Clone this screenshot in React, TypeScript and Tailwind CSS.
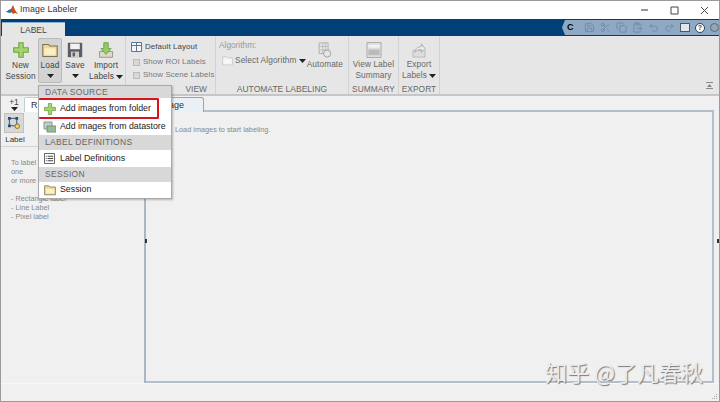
import { Save, Scissors, Copy, ClipboardPaste, Undo2, Redo2 } from 'lucide-react';

const Caret = ({ className = '' }: { className?: string }) => (
  <svg width="7" height="4" viewBox="0 0 7 4" className={className}>
    <path d="M0 0h7L3.500 4z" fill="#222" />
  </svg>
);

const PlusIcon = ({ size = 16 }: { size?: number }) => (
  <svg width={size} height={size} viewBox="0 0 22 22">
    <path d="M8 1h6v7h7v6h-7v7H8v-7H1V8h7z" fill="#a5d36e" stroke="#6ea544" strokeWidth="1.500" />
  </svg>
);

const FolderIcon = ({ size = 16, faded = false }: { size?: number; faded?: boolean }) => (
  <svg width={size} height={size} viewBox="0 0 20 20">
    <path d="M1 3h7l2 2h9v13H1z" fill={faded ? '#f0f0f0' : '#f1d98f'} stroke={faded ? '#c4c4c4' : '#77715c'} strokeWidth="1.300" />
    <path d="M3 8h14v8H3z" fill={faded ? '#f7f7f7' : '#fbefc4'} />
  </svg>
);

const SaveIcon = () => (
  <svg width="16" height="16" viewBox="0 0 20 20">
    <path d="M1 1h18v18H1z" fill="#5b5f64" />
    <path d="M4 2h12v7H4z" fill="#f2f2f2" />
    <path d="M5 12h10v7H5z" fill="#cfcfcf" />
    <path d="M7 13h3v5H7z" fill="#5b5f64" />
  </svg>
);

const ImportIcon = () => (
  <svg width="16" height="16" viewBox="0 0 22 22">
    <path d="M2 13h18v8H2z" fill="#ddd8ca" stroke="#99958a" strokeWidth="1.300" />
    <path d="M8 1h6v8h4l-7 8-7-8h4z" fill="#96cb64" stroke="#6ea544" strokeWidth="1.300" />
  </svg>
);

const RibbonButton = ({ icon, lines, caret, active, width }: { icon: React.ReactNode; lines: string[]; caret?: 'below' | 'inline'; active?: boolean; width: string }) => (
  <div className={`${width} flex flex-col items-center h-[45px] pt-[3px] rounded-[2px] border ${active ? 'bg-[#d3d3d3] border-[#b9b9b9]' : 'border-transparent'}`}>
    <div className="h-[16px] mb-[2px] flex items-center justify-center">{icon}</div>
    {lines.map((line, i) => (
      <div key={line} className="text-[8.300px] tracking-[0.1px] leading-[11px] whitespace-nowrap flex items-center gap-[2px] text-[#444]">
        {line}
        {caret === 'inline' && i === lines.length - 1 && <Caret />}
      </div>
    ))}
    {caret === 'below' && <Caret className="mt-[3px]" />}
  </div>
);

const SectionHead = ({ label, h }: { label: string; h: string }) => (
  <div className={`${h} flex items-center bg-[#d8d8d8] text-[#666] text-[8.500px] pl-[6px] tracking-[0.3px]`}>{label}</div>
);

const MenuRow = ({ icon, label, h }: { icon: React.ReactNode; label: string; h: string }) => (
  <div className={`flex items-center ${h} bg-white text-[8.800px] text-[#222]`}>
    <div className="w-[21px] flex justify-center shrink-0">{icon}</div>
    <span className="whitespace-nowrap">{label}</span>
  </div>
);

const LoadMenu = () => (
  <div className="absolute left-[37px] top-[84px] w-[134px] bg-white border border-[#a9a9a9] shadow-[1px_1px_2px_rgba(0,0,0,0.25)] z-10">
    <SectionHead label="DATA SOURCE" h="h-[12px]" />
    <div className="w-[120px] border-2 border-[#d7141e] rounded-[1px]">
      <div className="-ml-[2px]">
        <MenuRow icon={<PlusIcon size={12} />} label="Add images from folder" h="h-[17px]" />
      </div>
    </div>
    <MenuRow
      h="h-[16px]"
      icon={
        <svg width="13" height="12" viewBox="0 0 13 12">
          <path d="M1 1h8v7H1z" fill="#c5ceca" stroke="#8a9691" />
          <path d="M4 5h9v6H4z" fill="#93bd96" stroke="#72927a" />
        </svg>
      }
      label="Add images from datastore"
    />
    <SectionHead label="LABEL DEFINITIONS" h="h-[15px]" />
    <MenuRow
      h="h-[17px]"
      icon={
        <svg width="11" height="11" viewBox="0 0 12 12">
          <path d="M.5.5h11v11H.5z" fill="#fff" stroke="#555" />
          <path d="M2 3h1v1H2zM4 3h6v1H4zM2 5.500h1v1H2zM4 5.500h6v1H4zM2 8h1v1H2zM4 8h6v1H4z" fill="#444" />
        </svg>
      }
      label="Label Definitions"
    />
    <SectionHead label="SESSION" h="h-[15px]" />
    <MenuRow h="h-[16px]" icon={<FolderIcon size={12} />} label="Session" />
  </div>
);

const quickIcons = [Save, Scissors, Copy, ClipboardPaste, Undo2, Redo2];

export default function App() {
  return (
    <div className="relative w-[720px] h-[402px] overflow-hidden flex flex-col bg-[#f0f0f0] border border-[#9a9a9a] text-[#333]" style={{ fontFamily: '"Liberation Sans", Arial, sans-serif' }}>
      {/* title bar */}
      <div className="h-[18px] bg-white flex items-center pl-[5px] shrink-0">
        <svg width="12" height="12" viewBox="0 0 12 12">
          <path d="M0 8l3-2 2-1 2-4 2 5 3 4-3-1-2 1-2-3-2 1z" fill="#c8501e" />
          <path d="M0 8l3-2 2-1 1 3-2 1z" fill="#2a6fa8" />
        </svg>
        <span className="ml-[2px] text-[8.800px] tracking-[0.1px] text-[#333]">Image Labeler</span>
        <div className="ml-auto flex items-center">
          <svg width="8" height="8" viewBox="0 0 8 8" className="mr-[21px]"><path d="M0 4h7" stroke="#777" strokeWidth="1.500" /></svg>
          <svg width="9" height="9" viewBox="0 0 9 9" className="mr-[21px]"><path d="M1 1h7v7H1z" fill="none" stroke="#444" /></svg>
          <svg width="9" height="9" viewBox="0 0 9 9" className="mr-[10px]"><path d="M1 1l7 7M8 1L1 8" stroke="#444" /></svg>
        </div>
      </div>

      {/* tab strip */}
      <div className="h-[17px] bg-[#003f78] flex items-end pl-[1px] shrink-0 relative">
        <div className="w-[63px] h-[14px] bg-[#e6e6e6] text-center text-[8.500px] leading-[14px] text-[#444] border-t border-[#8fb0cc]">LABEL</div>
        <div className="absolute right-0 top-[1px] h-[15px] w-[157px] bg-[#8fa9c4] flex items-center pl-[5px] gap-[5px] [clip-path:polygon(3px_0,100%_0,100%_100%,3px_100%,0_50%)]">
          <span className="w-[16px] text-[9px] font-bold text-black">C</span>
          {quickIcons.map((Icon, i) => (
            <Icon key={i} size={11} strokeWidth={2} className="text-[#6f8ba8] shrink-0" />
          ))}
          <div className="w-[10px] h-[9px] shrink-0 bg-[#dfe6ee] border border-[#555]" />
          <div className="w-[10px] h-[10px] shrink-0 rounded-full bg-white border border-[#24425f] text-[7px] leading-[8px] text-center font-bold text-[#24425f]">?</div>
          <div className="w-[9px] h-[9px] shrink-0 rounded-full bg-[#9aa5b0] border border-[#5b6b7a]" />
        </div>
      </div>

      {/* ribbon */}
      <div className="h-[60px] bg-[#e6e6e6] border-b-2 border-[#c6c6c6] flex shrink-0 relative">
        <div className="flex pl-[2px] pt-[2px] w-[125px] border-r border-[#d2d2d2]">
          <RibbonButton width="w-[35px]" icon={<PlusIcon />} lines={['New', 'Session']} />
          <RibbonButton width="w-[24px]" active icon={<FolderIcon />} lines={['Load']} caret="below" />
          <RibbonButton width="w-[26px]" icon={<SaveIcon />} lines={['Save']} caret="below" />
          <RibbonButton width="w-[36px]" icon={<ImportIcon />} lines={['Import', 'Labels']} caret="inline" />
        </div>

        <div className="w-[90px] border-r border-[#d2d2d2] pl-[5px] pt-[5px] flex flex-col text-[7.900px] tracking-[0.1px] leading-[12px] relative">
          <div className="flex items-center gap-[3px] whitespace-nowrap text-[#444] mb-[3px]">
            <svg width="11" height="10" viewBox="0 0 11 10" className="shrink-0"><path d="M.5.5h10v9H.5zM.5 3.500h10M5.500.5v9" fill="#f6f6f6" stroke="#5a7896" /></svg>
            Default Layout
          </div>
          {['Show ROI Labels', 'Show Scene Labels'].map((t) => (
            <div key={t} className="flex items-center gap-[3px] whitespace-nowrap text-[#777] ml-[2px] mb-[1px]">
              <div className="w-[7px] h-[7px] shrink-0 bg-[#d8d8d8] border border-[#bbb]" />
              {t}
            </div>
          ))}
          <div className="absolute bottom-[-1px] right-[8px] text-[8.300px] leading-[11px] text-[#666]">VIEW</div>
        </div>

        <div className="w-[133px] border-r border-[#d2d2d2] relative text-[#777]">
          <div className="absolute left-[3px] top-[4px] text-[8.300px] leading-[11px] text-[#999]">Algorithm:</div>
          <div className="absolute left-[6px] top-[19px] flex items-center gap-[2px] text-[8.300px] tracking-[0.1px] leading-[11px] text-[#666] whitespace-nowrap">
            <FolderIcon size={11} faded />
            Select Algorithm
            <Caret />
          </div>
          <div className="absolute right-[5px] top-[6px] flex flex-col items-center text-[8.300px] tracking-[0.1px] leading-[11px] text-[#666]">
            <svg width="17" height="16" viewBox="0 0 18 18">
              <path d="M3 1h10v12H3z" fill="none" stroke="#aaa" />
              <path d="M3 5h10M3 9h10M7 1v12M10 1v12" stroke="#bbb" />
              <circle cx="12" cy="13" r="4" fill="#e6e6e6" stroke="#999" />
            </svg>
            <span className="mt-[1px]">Automate</span>
          </div>
          <div className="absolute bottom-[-1px] inset-x-0 text-center text-[8.500px] leading-[11px] text-[#666]">AUTOMATE LABELING</div>
        </div>

        <div className="w-[50px] border-r border-[#d2d2d2] relative flex flex-col items-center pt-[6px] text-[8.300px] tracking-[0.1px] leading-[11px] text-[#666]">
          <svg width="16" height="16" viewBox="0 0 16 17">
            <path d="M.5.5h15v16H.5z" fill="#ddd" stroke="#aaa" />
            <path d="M2 3h12v3H2z" fill="#f2f2f2" />
            <path d="M2 8h12v6H2z" fill="#bbb" />
          </svg>
          <span className="mt-[1px]">View Label</span>
          <span>Summary</span>
          <div className="absolute bottom-[-1px] inset-x-0 text-center">SUMMARY</div>
        </div>

        <div className="w-[41px] border-r border-[#d2d2d2] relative flex flex-col items-center pt-[6px] text-[8.300px] tracking-[0.1px] leading-[11px] text-[#666]">
          <svg width="16" height="16" viewBox="0 0 17 17">
            <path d="M2 9h13v7H2z" fill="#ddd" stroke="#bbb" />
            <path d="M4 11c1-5 4-6 7-6V2l4 5-4 4V8c-3 0-5 1-7 3z" fill="#eee" stroke="#aaa" />
          </svg>
          <span className="mt-[1px]">Export</span>
          <span className="flex items-center gap-[2px]">Labels<Caret /></span>
          <div className="absolute bottom-[-1px] inset-x-0 text-center">EXPORT</div>
        </div>

        <svg width="7" height="7" viewBox="0 0 7 7" className="absolute right-[6px] bottom-[5px]">
          <path d="M0 0h7v1H0zM3.500 2L6 5H1zM0 6h7v1H0z" fill="#888" />
        </svg>
      </div>

      {/* document strip */}
      <div className="h-[16px] bg-[#f0f0f0] flex items-end shrink-0">
        <div className="w-[145px] h-full flex items-end pl-[3px]">
          <div className="w-[20px] h-[15px] text-[8.500px] leading-[10px] text-center text-[#444]">+1<Caret className="mx-auto" /></div>
          <div className="w-[118px] h-[15px] bg-white border border-b-0 border-[#c4ccd4] rounded-t-[2px] text-[9px] leading-[14px] pl-[6px]">R</div>
        </div>
        <div className="w-[58px] h-[15px] bg-[#e9f0f6] border border-b-0 border-[#8fa8bf] rounded-t-[3px] text-[9px] leading-[14px] text-right pr-[19px]">Image</div>
        <div className="flex-1 mr-[5px] border-b-2 border-[#b3c0cc]" />
      </div>

      {/* body */}
      <div className="flex-1 flex min-h-0">
        <div className="w-[145px] flex flex-col border-r-2 border-[#a9b7c5]">
          <div className="h-[35px] shrink-0 border-b border-[#d4d4d4] pl-[3px] flex flex-col items-start">
            <div className="w-[20px] h-[20px] mt-[1px] bg-[#d8d8d8] border border-[#c0c0c0] flex items-center justify-center">
              <svg width="12" height="12" viewBox="0 0 13 13">
                <path d="M1.500 1.500h8v8h-8z" fill="none" stroke="#2a4a7a" />
                <path d="M0 0h3v3H0zM8 0h3v3H8zM0 8h3v3H0z" fill="#2a4a7a" />
                <circle cx="10" cy="10" r="2.500" fill="#f1d36a" stroke="#8a6a20" />
              </svg>
            </div>
            <span className="w-[24px] mt-[1px] -ml-[1px] text-center text-[8px] leading-[11px] text-[#333]">Label</span>
          </div>
          <div className="pl-[10px] pt-[11px] text-[7.300px] leading-[9px] text-[#888]">
            {['To label a', 'one', 'or more d', '', '- Rectangle label', '- Line Label', '- Pixel label'].map((t, i) => (
              <div key={i} className="h-[9px] whitespace-nowrap">{t}</div>
            ))}
          </div>
          <div className="absolute left-[144px] top-[238px] w-[2px] h-[4px] bg-[#333]" />
        </div>
        <div className="flex-1 relative mr-[5px] border-b-2 border-r-2 border-[#b3c0cc] pl-[29px] pt-[13px] text-[7.300px] leading-[9px] text-[#888]">
          Load images to start labeling.
        </div>
        <div className="absolute right-[0px] top-[238px] w-[2px] h-[4px] bg-[#333]" />
      </div>

      {/* status bar */}
      <div className="h-[18px] shrink-0 flex items-end justify-end border-t border-[#f8f8f8] pr-[1px] pb-[1px]">
        <svg width="7" height="7" viewBox="0 0 7 7">
          <path d="M5 1h1v1H5zM3 3h1v1H3zM5 3h1v1H5zM1 5h1v1H1zM3 5h1v1H3zM5 5h1v1H5z" fill="#aaa" />
        </svg>
      </div>

      <LoadMenu />

      <div className="absolute right-[16px] bottom-[18px] text-[22px] leading-[24px] text-[#ececec] whitespace-nowrap [text-shadow:1px_1px_1px_#777]" style={{ fontFamily: '"Noto Sans CJK SC", sans-serif' }}>
        知乎 @了凡春秋
      </div>
    </div>
  );
}
